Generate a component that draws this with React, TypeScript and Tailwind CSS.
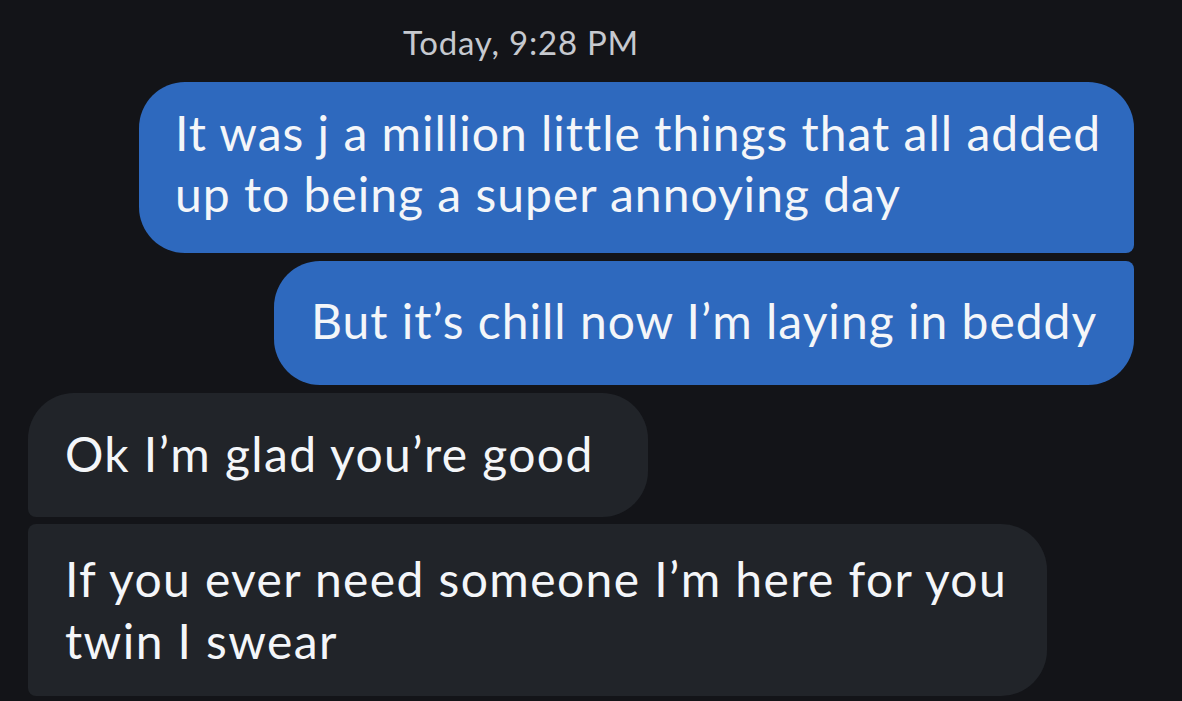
import React from 'react'

const font = { fontFamily: 'Lato, "Liberation Sans", sans-serif' }

export default function App() {
  return (
    <div className="w-[1182px] h-[701px] overflow-hidden bg-[#131418] text-[#f4f6f9]" style={font}>
      <div className="pl-[403px] pt-[22px] h-[82px] text-[33px] leading-[40px] tracking-[0.8px] text-[#c6c9cf]">
        Today, 9:28&#8239;PM
      </div>

      <div className="flex flex-col items-end pr-[48px] gap-[8px]">
        <div className="w-[995px] h-[171px] bg-[#2e69be] rounded-[46px] rounded-br-[8px] pl-[36px] pt-[20px] text-[48px] leading-[61px] tracking-[1px] whitespace-nowrap">
          <div>It was j a million little things that all added</div>
          <div>up to being a super annoying day</div>
        </div>
        <div className="w-[860px] h-[124px] bg-[#2e69be] rounded-[46px] rounded-tr-[8px] pl-[37px] flex items-center pb-[6px] text-[48px] leading-[61px] tracking-[1px] whitespace-nowrap">
          But it’s chill now I’m laying in beddy
        </div>
      </div>

      <div className="flex flex-col items-start pl-[28px] gap-[7px] mt-[8px]">
        <div className="w-[620px] h-[124px] bg-[#212429] rounded-[46px] rounded-bl-[8px] pl-[37px] flex items-center pb-[4px] text-[48px] leading-[61px] tracking-[1.4px] whitespace-nowrap">
          Ok I’m glad you’re good
        </div>
        <div className="w-[1019px] h-[172px] bg-[#212429] rounded-[46px] rounded-l-[8px] pl-[37px] pt-[24px] text-[48px] leading-[62px] tracking-[1.4px] whitespace-nowrap">
          <div>If you ever need someone I’m here for you</div>
          <div>twin I swear</div>
        </div>
      </div>
    </div>
  )
}
